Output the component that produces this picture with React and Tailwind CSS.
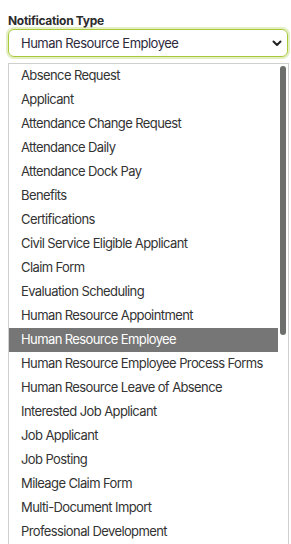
const OPTIONS = [
  'Absence Request',
  'Applicant',
  'Attendance Change Request',
  'Attendance Daily',
  'Attendance Dock Pay',
  'Benefits',
  'Certifications',
  'Civil Service Eligible Applicant',
  'Claim Form',
  'Evaluation Scheduling',
  'Human Resource Appointment',
  'Human Resource Employee',
  'Human Resource Employee Process Forms',
  'Human Resource Leave of Absence',
  'Interested Job Applicant',
  'Job Applicant',
  'Job Posting',
  'Mileage Claim Form',
  'Multi-Document Import',
  'Professional Development',
];

const SELECTED = 'Human Resource Employee';

export default function App() {
  return (
    <div className="w-[291px] h-[544px] bg-white overflow-hidden pt-[14px] pl-[8px] pr-[3px] font-['Inter',sans-serif]">
      <label className="block text-[12px] font-bold text-[#2b2b2b] leading-[14px] tracking-[-0.3px]">
        Notification Type
      </label>

      {/* Select box */}
      <div className="mt-[1px] h-[28px] flex items-center justify-between rounded-[6px] border border-[#a9c93a] ring-2 ring-[#e3eec2] pl-[12px] pr-[4px]">
        <span className="text-[13px] text-[#2e2a3c] tracking-[-0.5px] pt-[1px]">{SELECTED}</span>
        <svg className="w-[12px] h-[12px] text-[#222]" fill="none" viewBox="0 0 24 24" stroke="currentColor" strokeWidth={4}>
          <path strokeLinecap="round" strokeLinejoin="round" d="M5 9l7 7 7-7" />
        </svg>
      </div>

      {/* Open list */}
      <div className="mt-[6px] w-[281px] h-[482px] border border-[#cfcfcf] flex bg-white">
        <ul className="flex-1 flex flex-col">
          {OPTIONS.map((o) => (
            <li
              key={o}
              className={`h-[24px] flex items-center pl-[12px] text-[13px] tracking-[-0.6px] ${
                o === SELECTED ? 'bg-[#767676] text-white' : 'text-[#333]'
              }`}
            >
              {o}
            </li>
          ))}
        </ul>
        {/* scrollbar */}
        <div className="w-[10px] flex justify-center pt-[2px]">
          <div className="w-[6px] h-[269px] rounded-full bg-[#6c6f6b]" />
        </div>
      </div>
    </div>
  );
}
